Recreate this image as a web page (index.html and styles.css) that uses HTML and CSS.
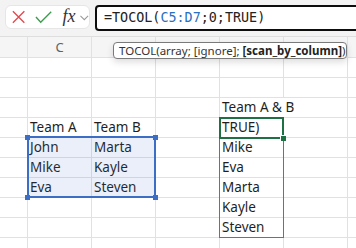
FILE: index.html
```html
<!DOCTYPE html>
<html>
<head>
<meta charset="utf-8">
<link rel="stylesheet" href="styles.css">
</head>
<body>
<div class="toolbar">
  <div class="fxbox">
    <svg class="ico" width="16" height="16" viewBox="0 0 16 16"><path d="M2 2 L14 14 M14 2 L2 14" stroke="#e2474e" stroke-width="1.4" fill="none"/></svg>
    <svg class="ico chk" width="18" height="14" viewBox="0 0 18 14"><path d="M1 7 L6 12.5 L17 1.5" stroke="#3c9a4c" stroke-width="1.4" fill="none"/></svg>
    <span class="fx">fx</span>
    <svg class="chev" width="9" height="6" viewBox="0 0 9 6"><path d="M0.5 0.8 L4.5 4.8 L8.5 0.8" stroke="#9a9a9a" stroke-width="1.1" fill="none"/></svg>
  </div>
  <div class="formula"><span>=TOCOL(</span><span class="ref">C5:D7</span><span>;0;TRUE)</span></div>
</div>
<div class="sheet">
  <div class="hd"></div><div class="hd lbl">C</div><div class="hd"></div><div class="hd"></div><div class="hd"></div><div class="hd"></div><div class="hd"></div>

  <div></div><div></div><div></div><div></div><div></div><div></div><div></div>
  <div></div><div></div><div></div><div></div><div></div><div></div><div></div>
  <div></div><div></div><div></div><div></div><div class="wide">Team A &amp; B</div><div></div>
  <div></div><div>Team A</div><div>Team B</div><div></div><div>TRUE)</div><div></div><div></div>
  <div></div><div>John</div><div>Marta</div><div></div><div>Mike</div><div></div><div></div>
  <div></div><div>Mike</div><div>Kayle</div><div></div><div>Eva</div><div></div><div></div>
  <div></div><div>Eva</div><div>Steven</div><div></div><div>Marta</div><div></div><div></div>
  <div></div><div></div><div></div><div></div><div>Kayle</div><div></div><div></div>
  <div></div><div></div><div></div><div></div><div>Steven</div><div></div><div></div>
  <div></div><div></div><div></div><div></div><div></div><div></div><div></div>

  <span class="sel"><i class="h tl"></i><i class="h tr"></i><i class="h bl"></i><i class="h br"></i></span>
  <span class="spill"></span>
  <span class="active"><i class="gh"></i></span>
</div>
<div class="tip">TOCOL(array; [ignore]; <b>[scan_by_column]</b>)</div>
</body>
</html>
```
FILE: styles.css
```css
html, body {
  margin: 0;
  padding: 0;
}
body {
  width: 356px;
  height: 248px;
  overflow: hidden;
  position: relative;
  background: #ffffff;
  font-family: "Noto Sans", "Liberation Sans", sans-serif;
  color: #1f1f1f;
}
.toolbar {
  height: 37px;
  box-sizing: border-box;
  border-bottom: 1px solid #dedede;
  background: #f3f3f3;
  display: flex;
  align-items: flex-start;
  padding: 5px 0 0 5px;
}
.fxbox {
  flex: 0 0 auto;
  width: 85px;
  height: 24px;
  box-sizing: border-box;
  background: #fff;
  border: 1px solid #e6e6e6;
  border-radius: 6px;
  display: flex;
  align-items: center;
  padding-left: 5px;
}
.ico { display: block; }
.chk { margin-left: 9px; }
.fx {
  font-family: "Liberation Serif", serif;
  font-style: italic;
  font-size: 18px;
  color: #333;
  margin-left: 10px;
  line-height: 20px;
  margin-top: -2px;
}
.chev { margin-left: 5px; margin-top: 1px; }
.formula {
  flex: 0 0 300px;
  margin-left: 5px;
  height: 26px;
  box-sizing: border-box;
  border: 2px solid #0d0d0d;
  border-radius: 4px;
  background: #fff;
  font-family: "DejaVu Sans Mono", monospace;
  font-size: 13.4px;
  line-height: 22px;
  padding-left: 7px;
  color: #222;
  white-space: nowrap;
}
.ref { color: #2a6fc4; }
.sheet {
  position: relative;
  display: grid;
  grid-template-columns: 27px repeat(6, 63px);
  grid-template-rows: 20px repeat(10, 19px);
  gap: 1px;
  background: #e1e1e1;
  border-bottom: 1px solid #e1e1e1;
  font-size: 13.5px;
  line-height: 19px;
}
.sheet > div {
  background: #fff;
  padding-left: 2px;
  white-space: nowrap;
}
.sheet > .wide {
  grid-column: span 2;
}
.sheet > .hd {
  background: #f5f5f5;
}
.sheet > .lbl {
  text-align: center;
  padding: 0;
  font-size: 13px;
  line-height: 20px;
  color: #616161;
}
.sel {
  position: absolute;
  left: 27px;
  top: 99px;
  width: 129px;
  height: 62px;
  box-sizing: border-box;
  border: 2px solid #3b6ec4;
  background: rgba(64, 110, 200, 0.11);
}
.h {
  position: absolute;
  width: 5px;
  height: 5px;
  background: #3b6ec4;
}
.tl { left: -4px; top: -3px; }
.tr { right: -4px; top: -3px; }
.bl { left: -4px; bottom: -4px; }
.br { right: -4px; bottom: -4px; }
.spill {
  position: absolute;
  left: 219px;
  top: 80px;
  width: 65px;
  height: 121px;
  box-sizing: border-box;
  border: 1px solid #4a74c9;
}
.active {
  position: absolute;
  left: 219px;
  top: 80px;
  width: 65px;
  height: 22px;
  box-sizing: border-box;
  border: 2px solid #1e7145;
}
.gh {
  position: absolute;
  right: -4px;
  bottom: -4px;
  width: 5px;
  height: 5px;
  background: #1e7145;
  border-left: 1px solid #fff;
  border-top: 1px solid #fff;
}
.tip {
  position: absolute;
  left: 113px;
  top: 42px;
  width: 234px;
  height: 17px;
  box-sizing: border-box;
  border: 1px solid #7a7a7a;
  border-radius: 4px;
  background: #fff;
  box-shadow: 0 3px 7px rgba(0, 0, 0, 0.14);
  font-size: 11.5px;
  line-height: 15px;
  padding-left: 5px;
  color: #333;
  white-space: nowrap;
  z-index: 5;
}
.tip b { font-weight: 700; color: #222; }
```
